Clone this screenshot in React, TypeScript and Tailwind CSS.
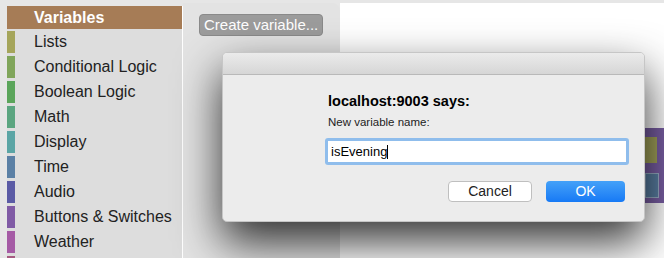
import React from "react";

const categories = [
	{ name: "Lists", color: "bg-[#a5a55b]" },
	{ name: "Conditional Logic", color: "bg-[#80a55b]" },
	{ name: "Boolean Logic", color: "bg-[#5ba55b]" },
	{ name: "Math", color: "bg-[#5ba580]" },
	{ name: "Display", color: "bg-[#5ba5a5]" },
	{ name: "Time", color: "bg-[#5b80a5]" },
	{ name: "Audio", color: "bg-[#5b5ba5]" },
	{ name: "Buttons & Switches", color: "bg-[#805ba5]" },
	{ name: "Weather", color: "bg-[#a55ba5]" },
	{ name: "", color: "bg-[#a55b80]" },
];

export default function App() {
	return (
		<div className="relative w-[664px] h-[258px] overflow-hidden bg-[#e6e6e6] font-['Liberation_Sans',Arial,sans-serif]">
			<div className="flex h-full pt-[3px]">
				{/* toolbox */}
				<div className="w-[183px] shrink-0 pl-[7px] pt-[3px] bg-[#e6e6e6]">
					<div className="bg-[#dddddd] h-full border-r border-white">
						<div className="h-[23px] flex items-center bg-[#a67c56] text-white font-bold text-[16px] pl-[27px] mb-[2px]">
							Variables
						</div>
						{categories.map((c, i) => (
							<div key={i} className="h-[25px] flex items-start">
								<div className={`w-[8px] h-[22px] ${c.color}`}></div>
								<span className="pl-[19px] text-[16px] leading-[22px] text-[#222]">{c.name}</span>
							</div>
						))}
					</div>
				</div>
				{/* flyout */}
				<div className="w-[157px] shrink-0 bg-[#e3e3e3] rounded-tr-[8px] pt-[10px] pl-[16px]">
					<div className="inline-block bg-[#9c9c9c] text-white text-[15px] leading-[20px] px-[4px] rounded-[4px] border border-[#8a8a8a]">
						Create variable...
					</div>
				</div>
				{/* workspace */}
				<div className="flex-1 bg-white relative">
					<div className="absolute left-[303px] top-[125px] w-[30px] h-[75px] bg-[#7a5fa5]">
						<div className="mt-[9px] ml-[2px] w-[12px] h-[26px] bg-[#a5a55b]"></div>
						<div className="mt-[10px] ml-[2px] w-[14px] h-[25px] bg-[#5b80a5] border border-[#9bb0c8]"></div>
					</div>
				</div>
			</div>

			{/* dialog */}
			<div className="absolute left-[222px] top-[52px] w-[423px] h-[170px] bg-[#ececec] rounded-[5px] shadow-[0_20px_45px_rgba(0,0,0,0.8)] border border-[#c6c6c6] flex flex-col overflow-hidden">
				<div className="h-[22px] shrink-0 bg-gradient-to-b from-[#ebebeb] to-[#d6d6d6] border-b border-[#b9b9b9]"></div>
				<div className="pl-[102px] pr-[15px] pt-[17px] flex flex-col">
					<div className="ml-[3px] text-[14.5px] font-bold text-black leading-[18px]">localhost:9003 says:</div>
					<div className="ml-[3px] text-[11.5px] text-[#222] mt-[5px] leading-[14px]">New variable name:</div>
					<div className="mt-[9px] rounded-[3px] p-[3px] bg-[#8fbdec]">
						<div className="h-[21px] bg-white flex items-center pl-[3px] text-[13px] text-black">
							isEvening<span className="inline-block w-[1px] h-[14px] bg-black"></span>
						</div>
					</div>
					<div className="flex justify-end gap-[14px] mt-[16px] pr-[4px]">
						<div className="w-[84px] h-[21px] bg-white border border-[#bfbfbf] rounded-[4px] flex items-center justify-center text-[14px] text-[#222]">
							Cancel
						</div>
						<div className="w-[79px] h-[21px] bg-gradient-to-b from-[#44a1f8] to-[#1679f5] rounded-[4px] flex items-center justify-center text-[14px] text-white">
							OK
						</div>
					</div>
				</div>
			</div>
		</div>
	);
}
